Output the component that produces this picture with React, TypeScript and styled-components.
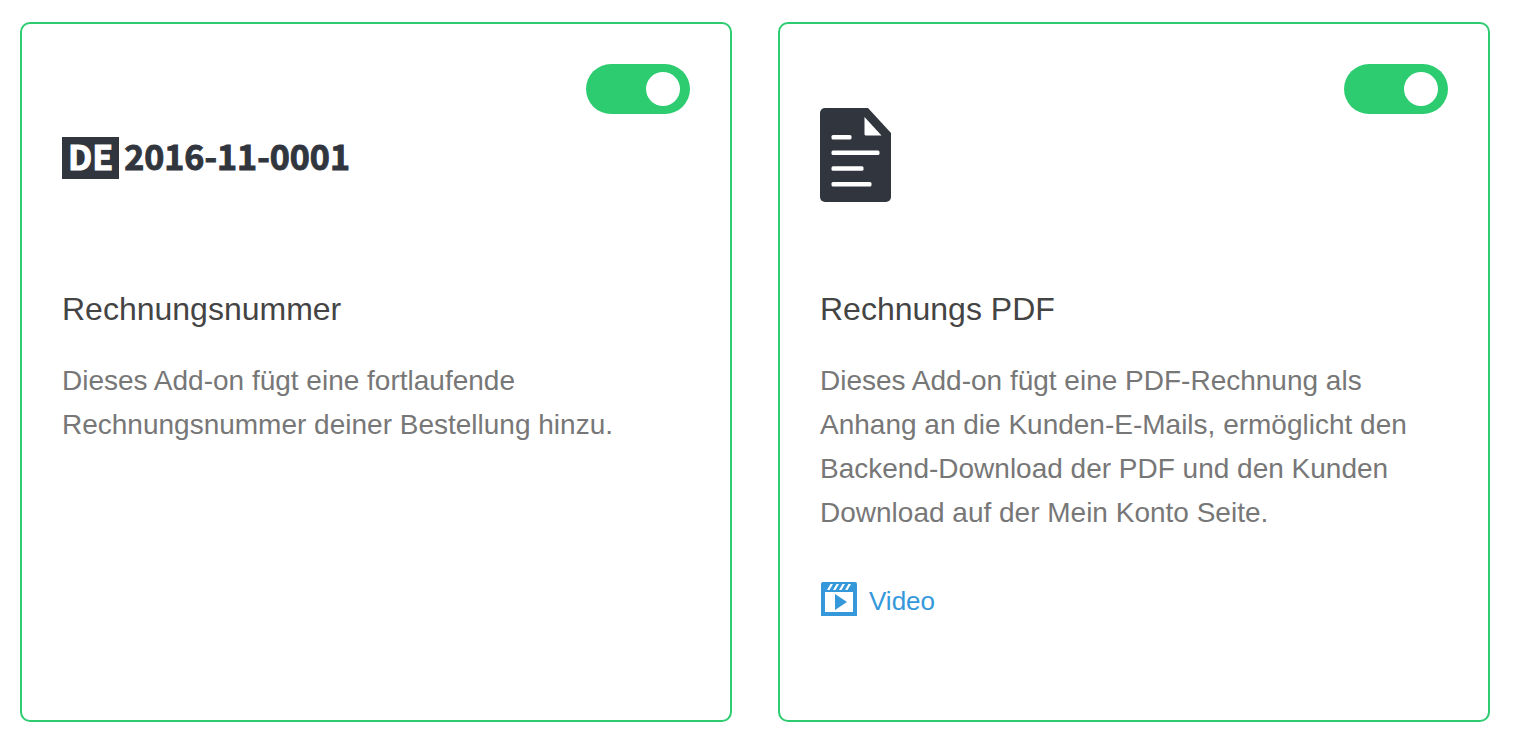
import React, { useId, useState } from "react";
import styled, { createGlobalStyle } from "styled-components";

const GlobalStyle = createGlobalStyle`
  *, *::before, *::after { box-sizing: border-box; }
  body {
    margin: 0;
    background: #fff;
    font-family: "Liberation Sans", Arial, sans-serif;
  }
`;

const Grid = styled.main`
  display: grid;
  grid-template-columns: repeat(2, minmax(0, 1fr));
  gap: 46px;
  padding: 22px 30px 22px 20px;
`;

const Card = styled.article`
  min-height: 700px;
  padding: 40px;
  border: 2px solid #2ecc71;
  border-radius: 10px;
  background: #fff;
`;

const CardHeader = styled.header`
  display: flex;
  justify-content: space-between;
  align-items: flex-start;
  height: 183px;
`;

const Media = styled.div`
  display: flex;
  align-items: center;
  height: 182px;
`;

const Switch = styled.input`
  appearance: none;
  flex: none;
  display: flex;
  align-items: center;
  justify-content: flex-start;
  width: 104px;
  height: 50px;
  margin: 0;
  padding: 0 10px;
  border-radius: 25px;
  background: #bdc3c7;
  cursor: pointer;

  &::before {
    content: "";
    width: 34px;
    height: 34px;
    border-radius: 50%;
    background: #fff;
  }

  &:checked {
    justify-content: flex-end;
    background: #2ecc71;
  }

  &:focus-visible {
    outline: 2px solid #3498db;
    outline-offset: 2px;
  }
`;

const NumberLogo = styled.div`
  display: flex;
  align-items: baseline;
  gap: 5px;
  padding-top: 6px;
  color: #31363e;
  font: 700 34px/38px "Noto Sans CJK SC", sans-serif;
  -webkit-text-stroke: 1px currentColor;
`;

const CountryBox = styled.span`
  padding: 0 6px 4px;
  background: #31363e;
  color: #fff;
`;

const Title = styled.h2`
  margin: 40px 0 0;
  color: #444;
  font-size: 32px;
  font-weight: 400;
  line-height: 44px;
`;

const Description = styled.p`
  margin: 28px 0 0;
  color: #777;
  font-size: 28px;
  line-height: 44px;
`;

const VideoLink = styled.a`
  display: inline-flex;
  align-items: center;
  gap: 12px;
  margin-top: 42px;
  padding-left: 1px;
  color: #3498db;
  font-size: 26px;
  line-height: 40px;
  text-decoration: none;
`;

const VideoLabel = styled.span`
  padding-top: 4px;
`;

function DocumentIcon() {
  return (
    <svg width="71" height="94" viewBox="0 0 71 94" aria-hidden="true">
      <path
        fill="#31363e"
        d="M5 0H48L71 25V89a5 5 0 0 1-5 5H5a5 5 0 0 1-5-5V5a5 5 0 0 1 5-5Z"
      />
      <path fill="#fff" d="M44.5 9 61.5 27.5H46a1.500 1.500 0 0 1-1.500-1.500Z" />
      <g fill="#fff">
        <rect x="11.5" y="27" width="20" height="4.5" rx="1.500" />
        <rect x="11.5" y="42.6" width="48" height="4.5" rx="1.500" />
        <rect x="11.5" y="58.2" width="32" height="4.5" rx="1.500" />
        <rect x="11.5" y="74" width="40" height="4.5" rx="1.500" />
      </g>
    </svg>
  );
}

function VideoIcon() {
  return (
    <svg width="36" height="34" viewBox="0 0 36 34" aria-hidden="true">
      <path
        fill="#3498db"
        fillRule="evenodd"
        d="M2 0H34a2 2 0 0 1 2 2V34H0V2a2 2 0 0 1 2-2ZM4 10V30H32V10ZM14 12 26 20 14 28Z"
      />
      <path
        fill="#fff"
        d="M6 8 9.500 2H12L8.500 8ZM12 8 15.500 2H18L14.500 8ZM18 8 21.500 2H24L20.500 8ZM24 8 27.500 2H30L26.500 8Z"
      />
    </svg>
  );
}

interface AddonProps {
  title: string;
  description: string;
  media: React.ReactNode;
  video?: boolean;
}

function AddonCard({ title, description, media, video }: AddonProps) {
  const [active, setActive] = useState(true);
  const titleId = useId();
  return (
    <Card>
      <CardHeader>
        <Media>{media}</Media>
        <Switch
          type="checkbox"
          role="switch"
          aria-labelledby={titleId}
          checked={active}
          onChange={(event) => setActive(event.target.checked)}
        />
      </CardHeader>
      <Title id={titleId}>{title}</Title>
      <Description>{description}</Description>
      {video && (
        <VideoLink href="#video">
          <VideoIcon />
          <VideoLabel>Video</VideoLabel>
        </VideoLink>
      )}
    </Card>
  );
}

export default function App() {
  return (
    <>
      <GlobalStyle />
      <Grid>
        <AddonCard
          title="Rechnungsnummer"
          description="Dieses Add-on fügt eine fortlaufende Rechnungsnummer deiner Bestellung hinzu."
          media={
            <NumberLogo>
              <CountryBox>DE</CountryBox>
              <span>2016-11-0001</span>
            </NumberLogo>
          }
        />
        <AddonCard
          title="Rechnungs PDF"
          description="Dieses Add-on fügt eine PDF-Rechnung als Anhang an die Kunden-E-Mails, ermöglicht den Backend-Download der PDF und den Kunden Download auf der Mein Konto Seite."
          media={<DocumentIcon />}
          video
        />
      </Grid>
    </>
  );
}
